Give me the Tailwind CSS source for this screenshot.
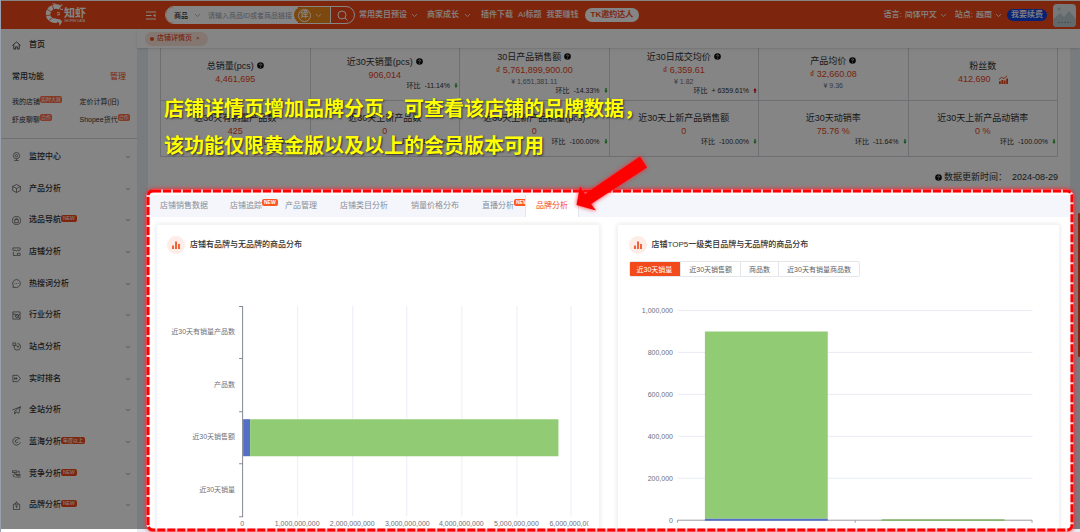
<!DOCTYPE html>
<html lang="zh-CN">
<head>
<meta charset="utf-8">
<title>店铺详情页</title>
<script src="https://cdn.jsdelivr.net/npm/@tailwindcss/browser@4"></script>
</head>
<body class="bg-white">
<svg class="hidden">
  <symbol id="chev" viewBox="0 0 8 6"><path d="M1 1.2 4 4.4 7 1.2" fill="none" stroke="currentColor" stroke-width=".9"/></symbol>
  <symbol id="help" viewBox="0 0 8 8"><circle cx="4" cy="4" r="3.8" fill="#111"/><path d="M2.9 3.2c0-1.5 2.3-1.4 2.2 0C5 3.900 4 3.900 4 4.900M4 5.600v.8" fill="none" stroke="#fff" stroke-width=".8"/></symbol>
  <symbol id="down" viewBox="0 0 4 6"><path d="M1.200 0h1.600v3H4L2 6 0 3h1.200z" fill="#1fa32c"/></symbol>
  <symbol id="up" viewBox="0 0 4 6"><path d="M1.200 6h1.600V3H4L2 0 0 3h1.200z" fill="#e60012"/></symbol>
  <symbol id="bars" viewBox="0 0 18 18"><circle cx="9" cy="9" r="9" fill="#feece7"/><path d="M6 9.500v3.500M9 5.500V13M12 8v5" stroke="#f04b1a" stroke-width="1.700" fill="none"/></symbol>
</svg>
<div class="relative flex h-screen min-h-[532px] flex-col overflow-hidden border-l border-gray-400 pt-px font-['Liberation_Sans','Noto_Sans_CJK_SC',sans-serif] text-[#303133]">

  <header class="flex h-7 shrink-0 items-center bg-[#f24a1a] text-[8px] leading-none text-white">
    <a href="#" class="ml-[44px] flex w-[101px] items-center" aria-label="知虾">
      <svg class="h-6 w-[19px]" viewBox="0 0 19 24" fill="none" stroke="#fff"><path d="M15 4.500C9 1.500 2.500 6 3.200 12c.4 4 4.500 6.500 8.500 5.500" stroke-width="4.500"/><path d="M7 1.500l2 5.500M2 6l5 3.500M.5 12.500l6-.5M3.500 18l4-3.500" stroke="#f24a1a" stroke-width=".8"/><path d="M12 3.500C11.500.8 9 .5 7.500.8M15 4c2-1 2-2 1.500-3M15 6l3 .5M12 9.500l3 .5M12 12l3-.5" stroke-width="1"/><path d="M11 16c4-.5 6 1 6 3l-2.500 4-.5-3.500-3-1z" fill="#fff" stroke="none"/></svg>
      <span class="flex flex-col"><span class="text-[11px] font-bold leading-3">知虾</span><span class="text-[3px] leading-[4px]">SHOPEE DATA</span></span>
    </a>
    <button class="mr-2 w-[11px]" aria-label="折叠菜单"><svg class="h-[9px] w-[10px]" viewBox="0 0 10 9"><path d="M0 1h10M0 4.500h5.500M0 8h10" stroke="#fff" stroke-width="1"/><path d="M9.500 2.800v3.400L7 4.500z" fill="#fff"/></svg></button>
    <form class="flex h-[18px] w-[190px] items-center overflow-hidden rounded-full border border-white" onsubmit="return false">
      <div class="flex h-full min-w-0 flex-1 items-center bg-white pl-2 text-[#333]">
        <select aria-label="搜索类型" class="w-[16px] appearance-none text-[7px] font-medium"><option>商品</option></select>
        <svg class="ml-1 h-[5px] w-[7px] text-gray-400"><use href="#chev"/></svg>
        <input aria-label="搜索" placeholder="请输入商品ID或者商品链接" class="ml-[7px] min-w-0 flex-1 text-[7px] placeholder:text-gray-400">
      </div>
      <button type="button" class="-ml-1 flex h-full w-9 items-center gap-[4px] rounded-l-full bg-[#f08a1a] pl-1" aria-label="翻译"><span class="flex size-[13px] shrink-0 items-center justify-center rounded-full border border-white text-[8px] font-bold">译</span><svg class="h-[5px] w-[7px]"><use href="#chev"/></svg></button>
      <button class="flex h-full w-6 items-center justify-center border-l border-white" aria-label="搜索"><svg class="size-[11px]" viewBox="0 0 11 11" fill="none" stroke="#fff"><circle cx="5" cy="5" r="4"/><path d="m8 8 2.500 2.500"/></svg></button>
    </form>
    <nav class="ml-1 flex items-center font-medium">
      <button class="flex items-center gap-[4px]">常用类目预设<svg class="h-[5px] w-[7px]"><use href="#chev"/></svg></button>
      <button class="ml-[9px] flex items-center gap-[5px]">商家成长<svg class="h-[5px] w-[7px]"><use href="#chev"/></svg></button>
      <a href="#" class="ml-[10px]">插件下载</a>
      <a href="#" class="ml-[5px]">AI标题</a>
      <a href="#" class="ml-[5px]">我要赚钱</a>
      <a href="#" class="ml-[6px] flex h-[14px] items-center rounded-full bg-white px-[6px] font-bold text-[#f24a1a]">TK邀约达人</a>
    </nav>
    <div class="ml-auto mr-1 flex items-center font-medium">
      <label for="lang">语言:</label><select id="lang" class="ml-[3px] w-8 appearance-none"><option>简体中文</option></select><svg class="ml-[3px] h-[5px] w-[7px]"><use href="#chev"/></svg>
      <label for="site" class="ml-[8px]">站点:</label><select id="site" class="ml-[3px] w-4 appearance-none"><option>越南</option></select><svg class="ml-[3px] h-[5px] w-[7px]"><use href="#chev"/></svg>
      <a href="#" class="ml-[5px] flex h-[12px] items-center rounded-full bg-[#0b42e0] px-1">我要续费</a>
      <button class="ml-[6px]" aria-label="用户头像"><svg class="size-[23px]" viewBox="0 0 23 23"><rect width="23" height="23" rx="4" fill="#e2e7ea"/><circle cx="6" cy="5" r="1.800" fill="#c3cdd2"/><path d="M0 15 7 9l4 4 5-6 7 8v4q0 4-4 4H4q-4 0-4-4z" fill="#bccad1"/><path d="M5 18.500h13" stroke="#8f9da5" stroke-dasharray="2 1"/></svg></button>
    </div>
  </header>

  <div class="flex min-h-0 flex-1">
    <aside class="flex w-[136px] shrink-0 flex-col bg-white text-[8px] leading-none">
      <a href="#" class="flex h-8 items-center gap-[8px] pl-[11px] font-medium"><svg class="size-[9px]" viewBox="0 0 10 10" fill="none" stroke="#444"><path d="M.5 5 5 1l4.500 4M2 4v5h2V6.500h2V9h2V4"/></svg>首页</a>
      <div class="flex h-8 items-center justify-between pl-[11px] pr-[11px]"><span class="font-medium">常用功能</span><button class="text-[#f24a1a]">管理</button></div>
      <div class="grid h-[46px] grid-cols-2 grid-rows-2 border-b border-gray-300 pb-[10px] pl-[11px] text-[7px]">
        <a href="#" class="flex items-center">我的店铺<span class="mb-1 rounded-xs bg-[#ff6b45] px-px text-[5px] leading-[7px] text-white">实时大屏</span></a>
        <a href="#" class="flex items-center pl-[5px]">定价计算(旧)</a>
        <a href="#" class="flex items-center">虾皮聊聊<span class="mb-1 rounded-xs bg-[#ff6b45] px-px text-[5px] leading-[7px] text-white">合作</span></a>
        <a href="#" class="flex items-center whitespace-nowrap pl-[5px]">Shopee货代<span class="mb-1 rounded-xs bg-[#ff6b45] px-px text-[5px] leading-[7px] text-white">合作</span></a>
      </div>
      <nav id="menu" class="flex flex-1 flex-col pb-[11px] pt-[2px] font-medium"></nav>
    </aside>

    <div class="flex min-w-0 flex-1 flex-col">
      <div class="z-[1] flex h-[19px] shrink-0 items-center bg-white pl-2 shadow-sm">
        <div class="flex h-[14px] items-center rounded-full bg-[#fde4da] pl-[5px] pr-2 text-[7px] font-medium text-[#e8441a]"><span class="mr-[3px] size-[4px] rounded-full bg-[#f24a1a]"></span>店铺详情页<button class="ml-1 text-[6px]" aria-label="关闭">×</button></div>
      </div>
      <main class="flex min-h-0 flex-1 flex-col bg-[#e9edf3] pl-[11px] pr-[10px]">
        <div class="shrink-0 bg-white px-3">
          <div id="stats" class="grid grid-cols-6 overflow-hidden border-l border-gray-300"></div>
          <div class="flex h-[34px] items-center justify-end gap-[2px] pt-[6px] text-[9px] leading-none"><svg class="size-[7px]"><use href="#help"/></svg>数据更新时间：<time class="ml-[3px]">2024-08-29</time></div>
        </div>

        <section class="relative z-20 -mr-[2px] mb-[2px] flex min-h-0 flex-1 flex-col rounded-md bg-white pt-[4px] shadow-[0_0_4px_2px_#ff2030]">
          <div class="flex h-[22px] shrink-0 items-stretch bg-[#f4f6fb] text-[8px] leading-none text-[#888d96]" role="tablist">
            <button role="tab" class="pl-3 pr-[11px]">店铺销售数据</button>
            <button role="tab" class="relative px-[11px]">店铺追踪<span class="absolute left-[43px] top-[4px] rounded-xs bg-[#ff5722] px-[2px] text-[5px] font-bold leading-[7px] text-white">NEW</span></button>
            <button role="tab" class="px-[12px]">产品管理</button>
            <button role="tab" class="px-[11px]">店铺类目分析</button>
            <button role="tab" class="px-[12px]">销量价格分布</button>
            <button role="tab" class="relative overflow-hidden px-[11px]">直播分析<span class="absolute left-[43px] top-[4px] rounded-xs bg-[#ff5722] px-[2px] text-[5px] font-bold leading-[7px] text-white">NEW</span></button>
            <button role="tab" aria-selected="true" class="border-x border-[#e4e7ed] bg-white px-[10px] text-[#f04b1a]">品牌分析</button>
          </div>
          <div class="grid min-h-0 flex-1 grid-cols-2 gap-[17px] overflow-hidden pl-2 pr-3 pt-[7px]">
            <article class="rounded-xs border border-b-0 border-gray-100 pt-[11px] shadow-[0_0_4px_#0000001a]">
              <h2 class="flex items-center gap-[5px] pl-[10px] text-[8px] font-medium leading-none"><svg class="size-[18px]"><use href="#bars"/></svg>店铺有品牌与无品牌的商品分布</h2>
              <svg class="mt-[6px] w-full" viewBox="158 260 441 270" font-size="7" fill="#6e7079">
                <path d="M298.500 306v210M353.500 306v210M407.500 306v210M462.500 306v210M517.500 306v210M571.500 306v210" stroke="#ebeef8"/>
                <path d="M244 419h7v37h-7z" fill="#5470c6"/><path d="M251 419h308v37H251z" fill="#91cc75"/>
                <path d="M243.500 306v211M240 306.500h4M240 358.500h4M240 411.500h4M240 463.500h4M240 516.500h4" stroke="#858993"/>
                <g text-anchor="end"><text x="236" y="334">近30天有销量产品数</text><text x="236" y="387">产品数</text><text x="236" y="439">近30天销售额</text><text x="236" y="492">近30天销量</text></g>
                <g text-anchor="middle"><text x="243" y="526">0</text><text x="298" y="526">1,000,000,000</text><text x="353" y="526">2,000,000,000</text><text x="408" y="526">3,000,000,000</text><text x="462" y="526">4,000,000,000</text><text x="517" y="526">5,000,000,000</text></g>
                <svg x="545" y="515" width="44" height="15" viewBox="545 515 44 15"><text x="550" y="526">6,000,000,000</text></svg>
              </svg>
            </article>
            <article class="rounded-xs border border-b-0 border-gray-100 pt-[11px] shadow-[0_0_4px_#0000001a]">
              <h2 class="flex items-center gap-[5px] pl-[11px] text-[8px] font-medium leading-none"><svg class="size-[18px]"><use href="#bars"/></svg>店铺TOP5一级类目品牌与无品牌的商品分布</h2>
              <div class="ml-[11px] mt-[7px] flex h-4 w-max divide-x divide-gray-200 overflow-hidden rounded-xs border border-gray-200 text-[7px] leading-none text-[#606266]">
                <button class="-my-px -ml-px bg-[#f24a1a] px-2 text-white">近30天销量</button><button class="px-2">近30天销售额</button><button class="px-2">商品数</button><button class="px-2">近30天有销量商品数</button>
              </div>
              <svg class="w-full" viewBox="618 277 442 253" font-size="7" fill="#6e7079">
                <path d="M678 310.500h355M678 352.500h355M678 394.500h355M678 436.500h355M678 478.500h355" stroke="#e8ebf5"/>
                <path d="M705 331.500h123V519H705zM882 519.500h123v1H882z" fill="#91cc75"/>
                <path d="M677.500 523v-2.500h355v2.500M855.500 520.500v2.500" stroke="#9a9da5" fill="none"/>
                <path d="M705 519h123v2H705z" fill="#5470c6"/><path d="M882 520h123v1H882z" fill="#7ab65e"/>
                <g text-anchor="end"><text x="673" y="313">1,000,000</text><text x="673" y="355">800,000</text><text x="673" y="397">600,000</text><text x="673" y="439">400,000</text><text x="673" y="481">200,000</text><text x="673" y="523">0</text></g>
                <g text-anchor="middle"><text x="766" y="534">美妆个护</text><text x="943" y="534">健康</text></g>
              </svg>
            </article>
          </div>
          <svg class="pointer-events-none absolute inset-0 size-full overflow-visible" aria-hidden="true"><rect width="100%" height="100%" rx="5" fill="none" stroke="#ffc4cc" stroke-width="3"/><rect width="100%" height="100%" rx="5" fill="none" stroke="#f00" stroke-width="3" stroke-dasharray="8 2"/></svg>
        </section>
      </main>
    </div>
  </div>

  <div class="pointer-events-none absolute right-0 top-[213px] h-36 w-[2px] rounded bg-[#f24a1a]"></div>
  <div class="pointer-events-none absolute inset-0 bottom-[3px] z-10 bg-black/48"></div>
  <p class="pointer-events-none absolute left-[163px] top-[91px] z-30 whitespace-nowrap text-[20px] font-bold leading-[37px] text-[#ff0] [text-shadow:1px_1px_2px_#000a]">店铺详情页增加品牌分页，可查看该店铺的品牌数据，<br>该功能仅限黄金版以及以上的会员版本可用</p>
  <svg class="pointer-events-none absolute left-[569px] top-[148px] z-30 h-[70px] w-[86px] drop-shadow-[0_0_2px_#ff2030]" viewBox="570 148 86 70"><path d="M640 156.500 647 167.500 591 204 596 210.500 576.500 205 580 186.500 585 194z" fill="#f00"/></svg>
</div>

<script>
const menu = [
  ['监控中心', '', '<circle cx="5" cy="4" r="3.500"/><circle cx="5" cy="4" r="1.300"/><path d="M5 7.500v2M2.500 9.500h5"/>'],
  ['产品分析', '', '<path d="M5 .5 9.300 2.700v4.600L5 9.500.7 7.300V2.700zM.7 2.700 5 5l4.300-2.300M5 5v4.500"/>'],
  ['选品导航', 'NEW', '<circle cx="5" cy="5" r="4.500"/><path d="M3 4h4v3.500H3zM3.800 4c0-2 2.400-2 2.400 0"/>'],
  ['店铺分析', '', '<path d="M1 1h8v2.500q-1 1.500-2.500 0-1.500 1.500-3 0Q2 5 1 3.500zM1.500 5.500v4h4M6 7h3v2.500H6z"/>'],
  ['热搜词分析', '', '<path d="M1 9.300h4A4.300 4.300 0 1 0 1.500 7.500zM2.800 5h.8M4.600 5h.8M6.400 5h.8"/>'],
  ['行业分析', '', '<path d="M1 1h8v8H1zM1 3.500h3L6 6l3-3"/><circle cx="5.500" cy="5.500" r="1.800"/><path d="m7 7 2 2"/>'],
  ['站点分析', '', '<path d="M1 1h3v3H1zM2.500 4v2q0 3 3 3A3.700 3.700 0 0 0 6 1.500M5 3l1.500 3L8 4"/>'],
  ['实时排名', '', '<path d="M1 1.500h5.500L9.300 5 6.500 8.500H1zM3 3.500v3M4.800 3.500v3M3 5h3"/>'],
  ['全站分析', '', '<path d="M.5 4.500 9.500.8 7.500 8 4.500 6.500 3 9V5.800L9.500.8"/>'],
  ['蓝海分析', '年度以上', '<path d="M8.500 2A4.300 4.300 0 1 0 9.300 6M6.500 3Q3 2.500 3.500 5.500 5 7.500 7 5.500M6.500 1l2.500.8"/>'],
  ['竞争分析', 'NEW', '<path d="M.5 2h5v2h-5zM3 4v2h3M5 6h4v1.500H5zM5 9h4.500M6.500 2.500H8V5M1 6q0 3 3 3"/>'],
  ['品牌分析', 'NEW', '<path d="M1.500 3.500h7v6h-7zM3.500 3.500 5 .7l1.500 2.800M3.500 5.500h3M5 5.500V8"/>']
];
document.getElementById('menu').innerHTML = menu.map(([name, tag, icon]) =>
  `<button class="flex flex-1 items-center pl-[11px] pr-[6px]"><svg class="mr-[8px] size-[9px]" viewBox="0 0 10 10" fill="none" stroke="#555" stroke-width=".8">${icon}</svg>${name}${tag ? `<span class="mb-[3px] rounded-xs bg-[#f24a1a] px-[2px] text-[5px] leading-[7px] text-white">${tag}</span>` : ''}<svg class="ml-auto h-[4px] w-[6px] text-gray-500"><use href="#chev"/></svg></button>`).join('');

const trend = '<svg class="ml-2 size-[9px]" viewBox="0 0 10 10"><path d="M0 10V7h2v3zM2.700 10V5.500h2V10zM5.300 10V6h2v4zM8 10V4h2v6z" fill="#e8441a"/><path d="m0 5 3-2.500L5.500 4 9 .8" stroke="#e8441a" fill="none"/></svg>';
const stats = [
  ['总销量(pcs)', 1, '4,461,695'],
  ['近30天销量(pcs)', 1, '906,014', '', '-11.14%'],
  ['30日产品销售额', 1, '₫ 5,761,899,900.00', '¥ 1,651,381.11', '-14.33%'],
  ['近30日成交均价', 1, '₫ 6,359.61', '¥ 1.82', '+ 6359.61%'],
  ['产品均价', 1, '₫ 32,660.08', '¥ 9.36'],
  ['粉丝数', 0, '412,690' + trend],
  ['近30天有销量产品数', 0, '425', '', '-12.35%'],
  ['近30天上新产品数', 0, '0', '', '-100.00%'],
  ['近30天上新产品销量(pcs)', 0, '0', '', '-100.00%'],
  ['近30天上新产品销售额', 0, '0', '', '-100.00%'],
  ['近30天动销率', 0, '75.76 %', '', '-11.64%'],
  ['近30天上新产品动销率', 0, '0 %', '', '-100.00%']
];
document.getElementById('stats').innerHTML = stats.map(([title, help, value, sub, change], i) =>
  `<div class="${i < 6 ? 'flex h-[53px] flex-col justify-end border-b border-r border-gray-300' : 'flex h-14 flex-col justify-end border-b border-r border-gray-300'}"><div class="flex h-14 shrink-0 flex-col items-center justify-center text-[9px]">
    <div class="flex items-center gap-[3px] leading-[14px]">${title}${help ? '<svg class="size-[7px]"><use href="#help"/></svg>' : ''}</div>
    <div class="flex items-center leading-[13px] text-[#e8441a]">${value}</div>
    ${sub ? `<div class="text-[7px] leading-[10px] text-gray-500">${sub}</div>` : ''}
    ${change ? `<div class="flex items-center gap-[4px] self-end pr-px text-[7px] leading-[8px]"><span>环比</span><span>${change}</span><svg class="h-[5px] w-[4px]"><use href="${change[0] === '+' ? '#up' : '#down'}"/></svg></div>` : ''}
  </div></div>`).join('');
</script>
</body>
</html>
